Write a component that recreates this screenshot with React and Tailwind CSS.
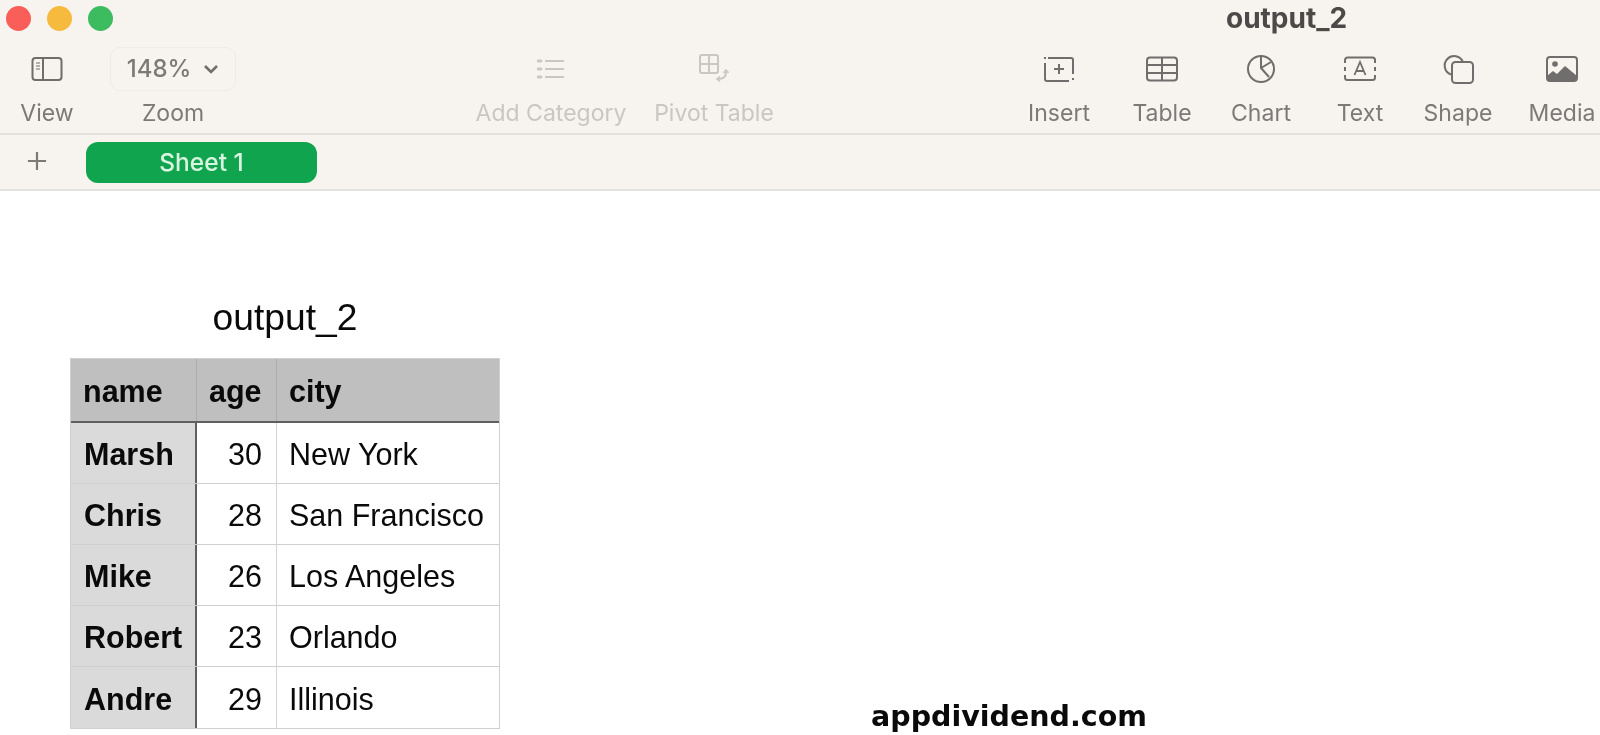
const G = "#6f6e6c";
const L = "#c9c7c4";

function ViewIcon() {
  return (
    <svg width="32" height="26" viewBox="0 0 32 26" fill="none" stroke={G} strokeWidth="2">
      <rect x="1.500" y="2" width="29" height="22" rx="3" />
      <path d="M12 2v22" />
      <path d="M5 7h4M5 10h4M5 13h4" strokeWidth="1.200" />
    </svg>
  );
}
function ListIcon() {
  return (
    <svg width="28" height="22" viewBox="0 0 28 22" fill="none" stroke={L} strokeWidth="2.200">
      <path d="M8 3h19M8 11h19M8 19h19" />
      <path d="M1 3h3M1 11h3M1 19h3" strokeWidth="2.800" strokeLinecap="round" />
    </svg>
  );
}
function PivotIcon() {
  return (
    <svg width="30" height="30" viewBox="0 0 30 30" fill="none" stroke={L} strokeWidth="2">
      <rect x="1" y="1" width="18" height="18" rx="2" />
      <path d="M10 1v18M1 10h18" />
      <path d="M27 18c0 5-3 7-8 7" />
      <path d="M24.500 19l2.500-3 2.500 3M21 22.500l-3 2.500 3 2.500" strokeWidth="1.600" />
    </svg>
  );
}
function InsertIcon() {
  return (
    <svg width="34" height="28" viewBox="0 0 34 28" fill="none" stroke={G} strokeWidth="2">
      <path d="M6 3h23a2 2 0 0 1 2 2v14M31 23v2M27 26H5a2 2 0 0 1-2-2V8M3 2v2" />
      <path d="M17 9v10M12 14h10" />
    </svg>
  );
}
function TableIcon() {
  return (
    <svg width="32" height="26" viewBox="0 0 32 26" fill="none" stroke={G} strokeWidth="2">
      <rect x="1" y="1.500" width="30" height="23" rx="3" />
      <path d="M1 9h30M1 17h30M16 1.500v23" />
    </svg>
  );
}
function ChartIcon() {
  return (
    <svg width="30" height="30" viewBox="0 0 30 30" fill="none" stroke={G} strokeWidth="2">
      <circle cx="15" cy="15" r="13" />
      <path d="M15 2v12l8 9M15 14l10-6" />
    </svg>
  );
}
function TextIcon() {
  return (
    <svg width="34" height="26" viewBox="0 0 34 26" fill="none" stroke={G} strokeWidth="2">
      <path d="M2 7V4a2.500 2.500 0 0 1 2.500-2.500h25A2.500 2.500 0 0 1 32 4v3M2 11v4M32 11v4M2 19v2.500A2.500 2.500 0 0 0 4.500 24h25a2.500 2.500 0 0 0 2.500-2.500V19" />
      <path d="M11.500 19l5.500-13 5.500 13M13.500 15h7" strokeWidth="1.800" />
    </svg>
  );
}
function ShapeIcon() {
  return (
    <svg width="32" height="30" viewBox="0 0 32 30" fill="none" stroke={G} strokeWidth="2">
      <path d="M9 20.500A9.500 9.500 0 1 1 21 8" />
      <rect x="10" y="8" width="21" height="21" rx="3.500" />
    </svg>
  );
}
function MediaIcon() {
  return (
    <svg width="32" height="26" viewBox="0 0 32 26">
      <rect x="1" y="1" width="30" height="24" rx="3" fill="none" stroke={G} strokeWidth="2" />
      <circle cx="9" cy="8" r="2.800" fill={G} />
      <path d="M1 24v-4l6-5 4 3 8-8 12 10v4a1 1 0 0 1-1 1H2a1 1 0 0 1-1-1z" fill={G} />
    </svg>
  );
}

function Tool({ icon, label, width, offset, disabled }) {
  return (
    <div className={`flex flex-col items-center shrink-0 ${width} ${offset}`}>
      <div className="h-[44px] flex items-center justify-center">{icon}</div>
      <div className={`mt-[9px] h-[26px] leading-[26px] text-[23px] whitespace-nowrap ${disabled ? "text-[#c9c7c4]" : "text-[#7b7a78]"}`}>
        {label}
      </div>
    </div>
  );
}

const rows = [
  ["Marsh", "30", "New York"],
  ["Chris", "28", "San Francisco"],
  ["Mike", "26", "Los Angeles"],
  ["Robert", "23", "Orlando"],
  ["Andre", "29", "Illinois"],
];

export default function App() {
  return (
    <div className="w-[1600px] h-[735px] overflow-hidden bg-white font-['Liberation_Sans',sans-serif] flex flex-col blur-[0.4px]">
      <header className="bg-[#f7f3ee] font-['Inter',sans-serif] shrink-0">
        <div className="h-[47px] flex items-start">
          <div className="flex gap-[16px] pt-[6px] pl-[6px]">
            <span className="w-[25px] h-[25px] rounded-full bg-[#f95f58]" />
            <span className="w-[25px] h-[25px] rounded-full bg-[#f6bb3e]" />
            <span className="w-[25px] h-[25px] rounded-full bg-[#3dbb5f]" />
          </div>
          <div className="ml-[1113px] mt-[2px] text-[28px] leading-[32px] font-bold text-[#4b4a48]">output_2</div>
        </div>
        <div className="h-[86px] flex items-start overflow-hidden">
          <Tool icon={<ViewIcon />} label="View" width="w-[70px]" offset="ml-[12px]" />
          <div className="ml-[28px] w-[126px] shrink-0 flex flex-col items-center">
            <div className="w-[126px] h-[44px] rounded-[10px] border border-[#efebe6] flex items-center justify-center gap-[12px] text-[24px] font-medium text-[#7b7a78]">
              <span>148%</span>
              <svg width="16" height="10" viewBox="0 0 16 10" fill="none" stroke="#6f6e6c" strokeWidth="2.600">
                <path d="M2 2l6 6 6-6" />
              </svg>
            </div>
            <div className="mt-[9px] h-[26px] leading-[26px] text-[23px] text-[#7b7a78]">Zoom</div>
          </div>
          <Tool icon={<ListIcon />} label="Add Category" width="w-[160px]" offset="ml-[235px]" disabled />
          <Tool icon={<PivotIcon />} label="Pivot Table" width="w-[130px]" offset="ml-[18px]" disabled />
          <Tool icon={<InsertIcon />} label="Insert" width="w-[80px]" offset="ml-[240px]" />
          <Tool icon={<TableIcon />} label="Table" width="w-[80px]" offset="ml-[23px]" />
          <Tool icon={<ChartIcon />} label="Chart" width="w-[80px]" offset="ml-[19px]" />
          <Tool icon={<TextIcon />} label="Text" width="w-[80px]" offset="ml-[19px]" />
          <Tool icon={<ShapeIcon />} label="Shape" width="w-[80px]" offset="ml-[18px]" />
          <Tool icon={<MediaIcon />} label="Media" width="w-[80px]" offset="ml-[24px]" />
        </div>
        <div className="h-[58px] border-t-2 border-b-2 border-t-[#e4e1dd] border-b-[#e6e3df] flex items-start">
          <svg className="ml-[27px] mt-[16px]" width="20" height="20" viewBox="0 0 22 22" fill="none" stroke="#7b7a78" strokeWidth="2.400">
            <path d="M11 1v20M1 11h20" />
          </svg>
          <div className="ml-[39px] mt-[7px] w-[231px] h-[41px] rounded-[12px] bg-[#10a44f] text-[#d9f5e0] text-[24.500px] font-medium flex items-center justify-center">
            Sheet 1
          </div>
        </div>
      </header>

      <main className="flex-1 flex items-start">
        <section className="ml-[70px] w-[430px] shrink-0 pt-[103px]">
          <h1 className="text-center text-[37.200px] leading-[46px] font-normal text-[#0a0a0a] mb-[18px]">output_2</h1>
          <div className="border border-[#d2d0ce]">
            <div className="grid grid-cols-[126px_80px_1fr] h-[64px] bg-[#bfbfbf] border-b-2 border-b-[#5f5f5f] text-[30.500px] font-bold text-[#0a0a0a]">
              <div className="pl-[12px] pt-[4px] flex items-center border-r border-r-[#adadad]">name</div>
              <div className="pl-[12px] pt-[4px] flex items-center border-r border-r-[#adadad]">age</div>
              <div className="pl-[12px] pt-[4px] flex items-center">city</div>
            </div>
            {rows.map((r, i) => (
              <div
                key={r[0]}
                className={`grid grid-cols-[126px_80px_1fr] h-[61px] text-[30.500px] text-[#0a0a0a] ${i < 4 ? "border-b border-b-[#d2cfcc]" : ""}`}
              >
                <div className="pl-[13px] pt-[4px] flex items-center bg-[#dadada] border-r-2 border-r-[#5f5f5f] font-bold">{r[0]}</div>
                <div className="pr-[14px] pt-[4px] flex items-center justify-end border-r border-r-[#d5d3d1]">{r[1]}</div>
                <div className="pl-[12px] pt-[4px] flex items-center">{r[2]}</div>
              </div>
            ))}
          </div>
        </section>
        <div className="ml-[371px] self-end mb-[2px] font-['DejaVu_Sans',sans-serif] font-bold text-[28.500px] leading-[33px] text-[#0a0a0a]">
          appdividend.com
        </div>
      </main>
    </div>
  );
}
